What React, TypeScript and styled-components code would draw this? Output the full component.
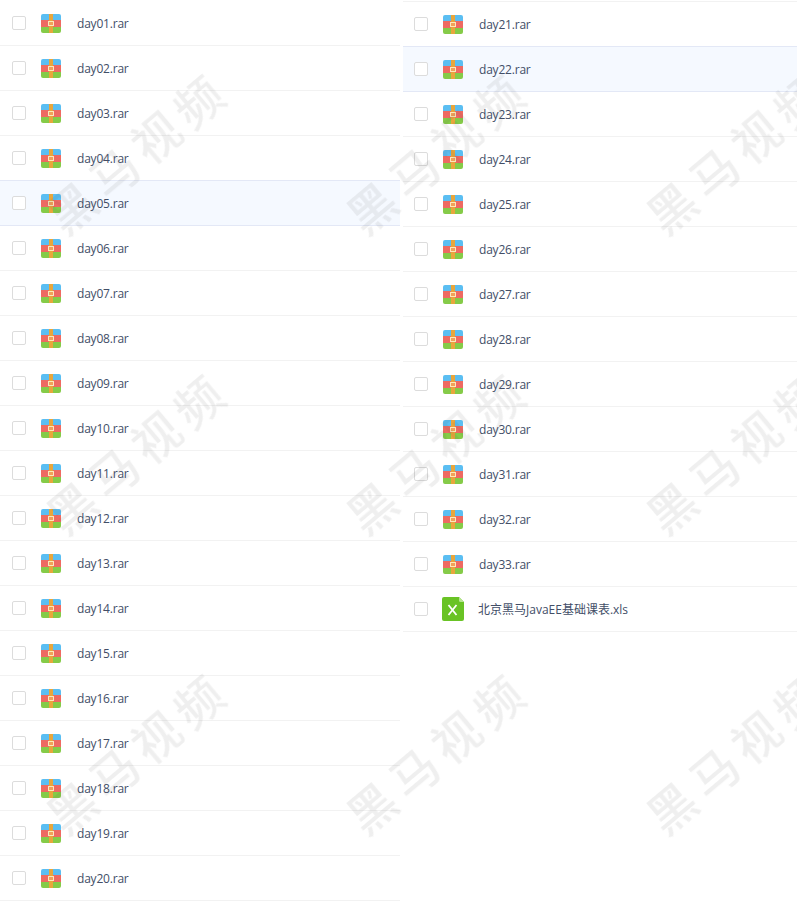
import React from "react";
import styled, { createGlobalStyle } from "styled-components";

const Global = createGlobalStyle`
  html, body { margin: 0; padding: 0; background: #fff; }
  body { font-family: "Open Sans", "Noto Sans CJK SC", sans-serif; overflow: hidden; }
`;

const Page = styled.div`
  position: relative;
  width: 797px;
  height: 905px;
  overflow: hidden;
  display: flex;
  align-items: flex-start;
  gap: 3px;
`;

const Column = styled.div<{ $top: number; $width: number; $inset: number }>`
  width: ${(p) => p.$width}px;
  padding-top: ${(p) => p.$top}px;
  flex: none;
  --inset: ${(p) => p.$inset}px;
`;

const Row = styled.div<{ $active?: boolean; $first?: boolean }>`
  box-sizing: border-box;
  height: ${(p) => (p.$first ? 46 : 45)}px;
  display: flex;
  align-items: center;
  padding-left: var(--inset);
  border-bottom: 1px solid ${(p) => (p.$active ? "#e3e8f6" : "#f2f2f2")};
  border-top: ${(p) => (p.$first ? "1px solid #f2f2f2" : "none")};
  background: ${(p) => (p.$active ? "#f5f9ff" : "transparent")};
  box-shadow: ${(p) => (p.$active ? "0 -1px 0 #e3e8f6" : "none")};
`;

const Check = styled.span`
  box-sizing: border-box;
  width: 14px;
  height: 14px;
  border: 1px solid #dcdcdc;
  border-radius: 2px;
  background: #fff;
  flex: none;
`;

const IconSlot = styled.span`
  width: 22px;
  height: 24px;
  margin-left: 14px;
  flex: none;
  display: flex;
  align-items: center;
  justify-content: center;
`;

const Name = styled.span<{ $wide?: boolean }>`
  margin: 2px 0 0 ${(p) => (p.$wide ? 14 : 15)}px;
  font-size: 12px;
  line-height: 16px;
  letter-spacing: ${(p) => (p.$wide ? 0 : -0.2)}px;
  color: #424e67;
  white-space: nowrap;
`;

const Overlay = styled.div`
  position: absolute;
  inset: 0;
  pointer-events: none;
  display: grid;
  grid-template-columns: repeat(3, 300px);
  grid-auto-rows: 300px;
`;

const Mark = styled.div`
  display: flex;
  align-items: center;
  justify-content: center;
  width: 300px;
  height: 300px;
  margin-left: -14px;
  font-family: "Noto Sans CJK SC", sans-serif;
  font-size: 47px;
  font-weight: 500;
  letter-spacing: 8px;
  white-space: nowrap;
  color: rgba(70, 70, 70, 0.085);
  filter: blur(0.5px);
  transform: rotate(-40deg);
`;

const RarIcon = () => (
  <svg width="20" height="20" viewBox="0 0 20 20" aria-hidden>
    <defs>
      <clipPath id="rar-clip">
        <rect width="20" height="19" y="1" rx="2" />
      </clipPath>
    </defs>
    <g clipPath="url(#rar-clip)">
      <rect width="20" height="6" y="1" fill="#5bbef2" />
      <rect width="20" height="7" y="7" fill="#ee6a62" />
      <rect width="20" height="6" y="14" fill="#85cb48" />
      <rect x="8" width="4" height="20" fill="#e8a63c" />
      <rect x="7" y="8" width="6" height="5" fill="#fce8bb" />
      <rect x="8" y="9" width="4" height="3" fill="#f2a05a" />
    </g>
  </svg>
);

const XlsIcon = () => (
  <svg width="22" height="24" viewBox="0 0 22 24" aria-hidden>
    <path d="M2 0H17L22 5V22a2 2 0 0 1-2 2H2a2 2 0 0 1-2-2V2a2 2 0 0 1 2-2Z" fill="#69c325" />
    <path d="M17 0L22 5H18.5A1.5 1.5 0 0 1 17 3.5Z" fill="#b6e58f" />
    <path d="M6.5 8L14.5 18M14.5 8L6.5 18" fill="none" stroke="#fff" strokeWidth="1.8" />
  </svg>
);

const pad = (n: number) => String(n).padStart(2, "0");
const left = Array.from({ length: 20 }, (_, i) => `day${pad(i + 1)}.rar`);
const right = Array.from({ length: 13 }, (_, i) => `day${pad(i + 21)}.rar`);

const App = () => (
  <Page>
    <Global />
    <Column $top={1} $width={400} $inset={12}>
      {left.map((n) => (
        <Row key={n} $active={n === "day05.rar"}>
          <Check />
          <IconSlot><RarIcon /></IconSlot>
          <Name>{n}</Name>
        </Row>
      ))}
    </Column>
    <Column $top={1} $width={394} $inset={11}>
      {right.map((n, i) => (
        <Row key={n} $first={i === 0} $active={n === "day22.rar"}>
          <Check />
          <IconSlot><RarIcon /></IconSlot>
          <Name>{n}</Name>
        </Row>
      ))}
      <Row>
        <Check />
        <IconSlot><XlsIcon /></IconSlot>
        <Name $wide>北京黑马JavaEE基础课表.xls</Name>
      </Row>
    </Column>
    <Overlay>
      {Array.from({ length: 9 }, (_, i) => (
        <Mark key={i}>黑马视频</Mark>
      ))}
    </Overlay>
  </Page>
);

export default App;
